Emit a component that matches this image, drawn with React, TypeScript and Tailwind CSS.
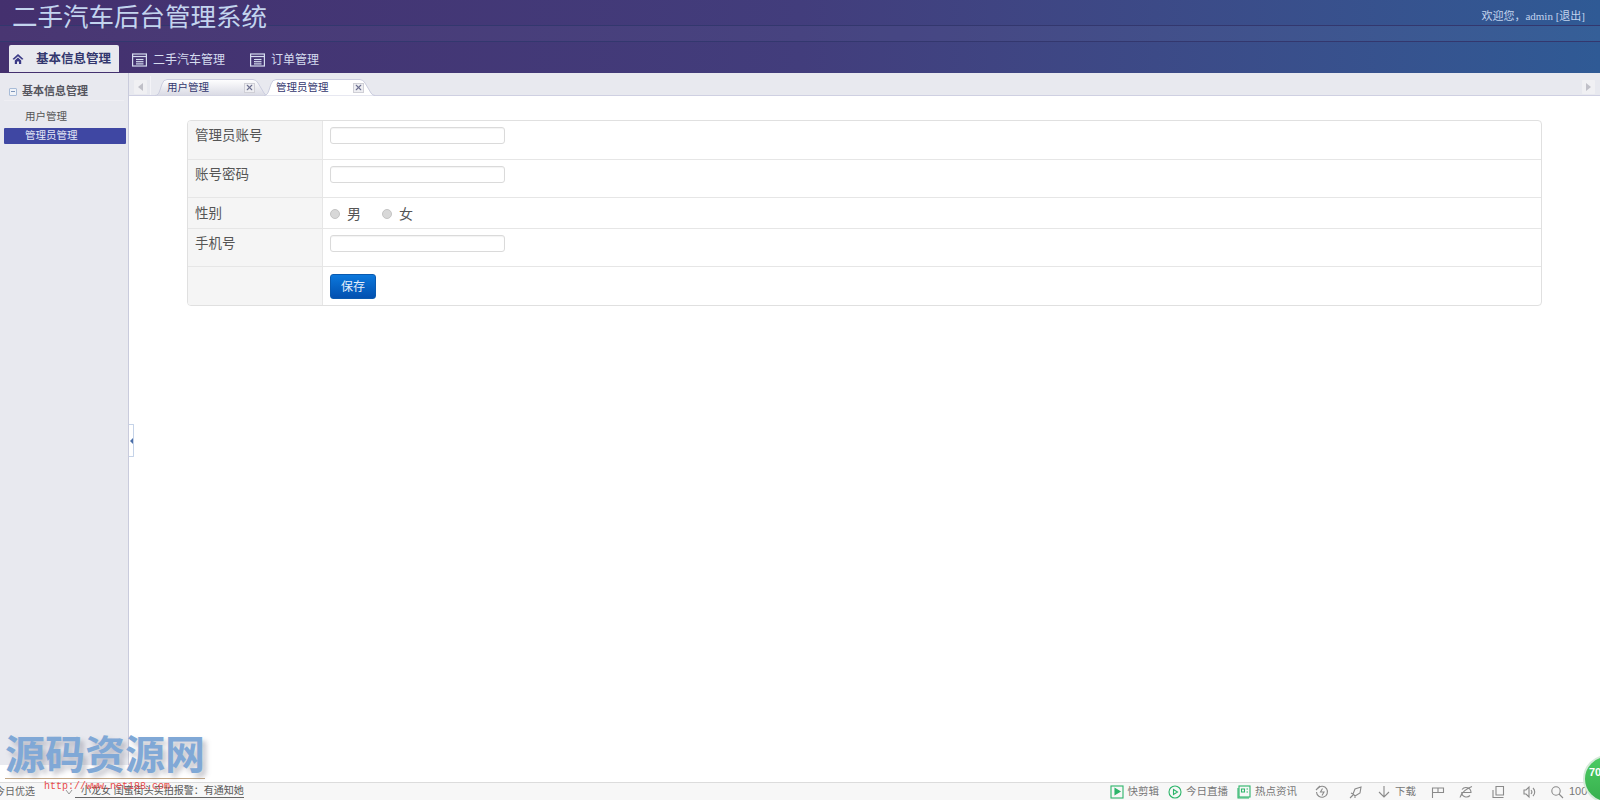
import { X } from 'lucide-react';

const font = "font-['Liberation_Sans','Noto_Sans_CJK_SC',sans-serif]";

function ListIcon() {
  return (
    <svg width="15" height="14" viewBox="0 0 15 14" fill="none" stroke="#d5dcef" strokeWidth="1.2">
      <rect x="0.6" y="1" width="13.8" height="12" />
      <line x1="0.6" y1="3.5" x2="14.4" y2="3.5" />
      <line x1="4" y1="6.5" x2="11.5" y2="6.5" />
      <line x1="4" y1="8.7" x2="11.5" y2="8.7" />
      <line x1="4" y1="10.9" x2="11.5" y2="10.9" />
    </svg>
  );
}

function HomeIcon() {
  return (
    <svg className="-mt-[2px]" width="12" height="12" viewBox="0 0 12 12" fill="#3b3a86">
      <path d="M6 1 L11.5 6 L10 6.8 L6 3.2 L2 6.8 L0.5 6 Z" />
      <path d="M2.8 7.4 L6 4.6 L9.2 7.4 V11 H7 V8.6 H5 V11 H2.8 Z" />
    </svg>
  );
}

function PageTab({ label, active, width, padRight }: { label: string; active?: boolean; width: number; padRight: string }) {
  const w = width;
  const shape = `M0 16.5 C3 16.5 4 14 5 11 L7 5 Q8.5 0.5 12 0.5 H${w - 15} Q${w - 12} 0.5 ${w - 10} 4 L${w - 4} 14 Q${w - 2.5} 16.5 ${w} 16.5`;
  return (
    <div
      className={`relative flex h-[17px] items-center justify-between pl-3 ${padRight} ${active ? 'z-10 -ml-[4px]' : ''}`}
      style={{ width: w }}
    >
      <svg className="absolute inset-0" width={w} height="17" viewBox={`0 0 ${w} 17`}>
        <defs>
          <linearGradient id="tabIdle" x1="0" y1="0" x2="0" y2="1">
            <stop offset="0" stopColor="#ffffff" />
            <stop offset="1" stopColor="#d9dae4" />
          </linearGradient>
        </defs>
        <path d={shape} fill={active ? '#ffffff' : 'url(#tabIdle)'} stroke="#cbcddf" />
      </svg>
      <span className="relative text-[10.5px] leading-none text-[#33376e]">{label}</span>
      <span className="relative flex h-[10px] w-[11px] items-center justify-center border border-[#cfcfd6] bg-[#eeeef2]">
        <X size={9} strokeWidth={3} className="text-[#6c7090]" />
      </span>
    </div>
  );
}

function FormRow({ label, height, labelPad = 'pt-[5px]', children }: { label?: string; height: string; labelPad?: string; children: React.ReactNode }) {
  return (
    <div className={`flex border-b border-[#e6e6e6] last:border-b-0 ${height}`}>
      <div className={`w-[135px] shrink-0 border-r border-[#e6e6e6] bg-[#f5f5f5] pl-[7px] text-[13.5px] leading-[20px] text-[#555] ${labelPad}`}>
        {label}
      </div>
      <div className="flex-1 pl-[7px] pt-[6px]">{children}</div>
    </div>
  );
}

function TextField() {
  return <div className="h-[17px] w-[175px] rounded-[3px] border border-[#dadada] bg-white shadow-[inset_0_1px_1px_rgba(0,0,0,0.05)]" />;
}

function Radio({ label }: { label: string }) {
  return (
    <div className="flex items-center">
      <span className="h-[10px] w-[10px] rounded-full border border-[#c4c4c4] bg-[#d8d8d8]" />
      <span className="ml-[7px] text-[14px] leading-[20px] text-[#555]">{label}</span>
    </div>
  );
}

function StatusItem({ color, label, className, glyph }: { color?: string; label?: string; className?: string; glyph: React.ReactNode }) {
  return (
    <div className={`flex items-center gap-[4px] ${className ?? ''}`}>
      <svg width="14" height="14" viewBox="0 0 14 14" fill="none" stroke={color ?? '#8a8a8a'} strokeWidth="1.1">
        {glyph}
      </svg>
      {label && <span>{label}</span>}
    </div>
  );
}

export default function App() {
  return (
    <div className={`relative flex h-[800px] w-[1600px] flex-col overflow-hidden bg-white ${font}`}>
      {/* Header */}
      <header className="h-[73px] shrink-0 bg-gradient-to-r from-[#44306e] via-[#423d7c] to-[#2f5a95]">
        <div className="flex h-[26px] items-start justify-between border-b border-[#33376e] pl-3 pr-[15px]">
          <h1 className="mt-[2px] text-[25.5px] leading-[31px] font-normal text-[#c3d4ee]">二手汽车后台管理系统</h1>
          <span className="pt-[9px] font-['Liberation_Serif','Noto_Sans_CJK_SC',serif] text-[11px] leading-[14px] text-[#c3d4ee]">
            欢迎您，admin [退出]
          </span>
        </div>
        <div className="h-[16px] border-b border-[#33376e] bg-white/[.03]" />
        <nav className="flex h-[30px] items-end pl-[9px]">
          <div className="flex h-[27px] w-[110px] items-center gap-[12px] rounded-t-[2px] bg-[#e8e9ef] pl-[3px] pt-[2px] text-[12.5px] font-bold text-[#33376e]">
            <HomeIcon />
            <span>基本信息管理</span>
          </div>
          <div className="flex h-[27px] items-center gap-[6px] pl-[13px] pt-[2px] text-[12px] text-[#d5dcef]">
            <ListIcon />
            <span>二手汽车管理</span>
          </div>
          <div className="flex h-[27px] items-center gap-[6px] pl-[25px] pt-[2px] text-[12px] text-[#d5dcef]">
            <ListIcon />
            <span>订单管理</span>
          </div>
        </nav>
      </header>

      <div className="flex h-[692px] shrink-0">
        {/* Sidebar */}
        <aside className="w-[129px] shrink-0 border-r border-[#c9cbdc] bg-[#e8e9ef]">
          <div className="mx-[4px] flex h-[28px] items-center gap-[5px] border-b border-[#eeeef3] pl-[5px] pt-[10px]">
            <span className="flex h-[8px] w-[8px] items-center justify-center rounded-[1px] border border-[#a8bcd8] bg-[#f0f3f8]">
              <span className="h-px w-[4px] bg-[#7f97bb]" />
            </span>
            <span className="text-[11px] font-bold text-[#55555e]">基本信息管理</span>
          </div>
          <div className="mt-[6px] mb-[2px] flex h-[19px] items-center pl-[25px] text-[10.5px] text-[#555]">用户管理</div>
          <div className="ml-[4px] flex h-[16px] w-[122px] items-center rounded-[1px] bg-[#3f47a3] pl-[21px] text-[10.5px] text-[#e4e7f6]">管理员管理</div>
        </aside>

        <main className="flex flex-1 flex-col">
          {/* Page tabs */}
          <div className="flex h-[23px] shrink-0 items-end justify-between border-b border-[#cfd0e2] bg-[#e8e9ef]">
            <div className="flex items-end">
              <div className="mb-[1px] ml-[5px] flex h-[14px] w-[13px] items-center justify-center rounded-[1px] bg-[#f0f0f3]">
                <span className="h-0 w-0 border-y-[4px] border-r-[5px] border-y-transparent border-r-[#c0c0c8]" />
              </div>
              <div className="ml-[3px] h-[19px] w-px self-end bg-[#f3f3f7]" />
              <div className="-mb-px ml-[4px] flex items-end">
                <PageTab label="用户管理" width={113} padRight="pr-[13px]" />
                <PageTab label="管理员管理" active width={111} padRight="pr-[11px]" />
              </div>
            </div>
            <div className="mb-[1px] mr-[5px] flex h-[14px] w-[13px] items-center justify-center rounded-[1px] bg-[#f0f0f3]">
              <span className="h-0 w-0 border-y-[4px] border-l-[5px] border-y-transparent border-l-[#c0c0c8]" />
            </div>
          </div>

          {/* Form */}
          <div className="pl-[58px] pr-[58px] pt-[24px]">
            <div className="overflow-hidden rounded-[4px] border border-[#e0e0e0]">
              <FormRow label="管理员账号" height="h-[39px]">
                <TextField />
              </FormRow>
              <FormRow label="账号密码" height="h-[38px]">
                <TextField />
              </FormRow>
              <FormRow label="性别" height="h-[31px]" labelPad="pt-[6px]">
                <div className="flex h-[20px] gap-[21px]">
                  <Radio label="男" />
                  <Radio label="女" />
                </div>
              </FormRow>
              <FormRow label="手机号" height="h-[38px]">
                <TextField />
              </FormRow>
              <FormRow height="h-[38px]">
                <button className="mt-px flex h-[25px] w-[46px] items-center justify-center rounded-[3px] border border-[#0a5ab0] bg-gradient-to-b from-[#0d78dc] to-[#0350b0] text-[12px] text-[#e6effa]">
                  保存
                </button>
              </FormRow>
            </div>
          </div>
        </main>
      </div>

      {/* Collapse handle */}
      <div className="absolute left-[129px] top-[424px] flex h-[33px] w-[5px] items-center justify-center rounded-r-[1px] border border-l-0 border-[#c5d3e8] bg-white">
        <span className="h-0 w-0 border-y-[3px] border-r-[3px] border-y-transparent border-r-[#4a6ea8]" />
      </div>

      <div className="flex-1 bg-white" />

      {/* Browser status bar */}
      <footer className="flex h-[18px] shrink-0 items-center justify-between border-t border-[#dcdcdc] bg-[#f7f7f7] text-[10.5px] text-[#777]">
        <div className="flex items-center">
          <span className="-ml-[5px] text-[10px] text-[#666]">今日优选</span>
          <svg className="ml-[30px]" width="8" height="8" viewBox="0 0 8 8" fill="none" stroke="#999">
            <path d="M1 2 L4 6 L7 2" />
          </svg>
          <span className="ml-[2px] border-b border-[#666] pl-[6px] text-[10px] leading-[12px] whitespace-nowrap text-[#555]">小龙女 闺蜜街头实拍报警：有通知她</span>
        </div>
        <div className="flex items-center">
          <StatusItem color="#2cb56a" label="快剪辑" glyph={<><rect x="1" y="1" width="12" height="12" /><path d="M5 3.5 L10 6.5 L5 9.5 Z" fill="#2cb56a" /></>} />
          <StatusItem className="ml-[9px]" color="#2cb56a" label="今日直播" glyph={<><circle cx="7" cy="7" r="6" /><path d="M5.5 4.5 L9.5 7 L5.5 9.5 Z" /></>} />
          <StatusItem className="ml-[9px] gap-[3px]" color="#2cb56a" label="热点资讯" glyph={<><rect x="2" y="1" width="11" height="11" /><path d="M4.5 4 H7.5 V7 H4.5 Z M9.5 4 H11 M9.5 7 H11 M1 3 V13 H12" /></>} />
          <StatusItem className="ml-[18px]" glyph={<><path d="M3 3 A5.5 5.5 0 1 1 1.5 7" /><path d="M7.5 3.5 L5.5 7 H9 L7 10.5 M1 5 L5 1" /></>} />
          <StatusItem className="ml-[20px]" glyph={<path d="M4 9 L6 4 L12 2 L11 8 L6 11 Z M8.5 5.5 h0.1 M1 13 L4 10 M2 8 L4 9 M6 11 L6 13" />} />
          <StatusItem className="ml-[14px]" label="下载" glyph={<path d="M7 1 V12 M2 7 L7 12 L12 7" />} />
          <StatusItem className="ml-[15px]" glyph={<path d="M1.5 13 V3 H12.5 V7.5 H1.5 M7 3 V7.5" />} />
          <StatusItem className="ml-[14px]" glyph={<path d="M2.5 7.5 H12 A5 5 0 0 0 3 4.5 M2.5 7.5 A5 5 0 0 0 11 10.5 M1 12.5 C2 8 8 3 13 1.5" />} />
          <StatusItem className="ml-[18px]" glyph={<path d="M5 1.5 H12.5 V10 H5 Z M2 5 V12.5 H12.5" />} />
          <StatusItem className="ml-[17px]" glyph={<path d="M2 5 H4 L7 2 V12 L4 9 H2 Z M9 5 A3 3 0 0 1 9 9 M11 3 A5.5 5.5 0 0 1 11 11" />} />
          <StatusItem className="ml-[14px]" glyph={<><circle cx="6" cy="6" r="4.2" /><path d="M9 9 L13 13" /></>} />
          <span className="ml-[5px] w-[31px] whitespace-nowrap text-[11px] text-[#777]">100%</span>
        </div>
      </footer>

      {/* Green speed ball */}
      <div className="absolute left-[1583px] top-[755px] h-[48px] w-[48px] rounded-full border-2 border-[#d5ead9] bg-gradient-to-b from-[#4ccb62] to-[#37b04e] pl-[4px] pt-[9px] text-[11px] leading-[12px] font-bold text-white">
        70
      </div>

      {/* Watermark */}
      <div className="absolute left-[5px] top-[733px] w-[200px] border-b border-[#c2a888] pb-[1px]">
        <span className="block text-[40px] leading-[44px] font-bold whitespace-nowrap text-[#80a8d6] [text-shadow:4px_4px_5px_rgba(90,90,110,0.35)]">
          源码资源网
        </span>
      </div>
      <span className="absolute left-[44px] top-[781px] font-['Liberation_Mono',monospace] text-[10px] leading-[12px] text-[#e84a4a]">
        http://www.net188.com
      </span>
    </div>
  );
}
